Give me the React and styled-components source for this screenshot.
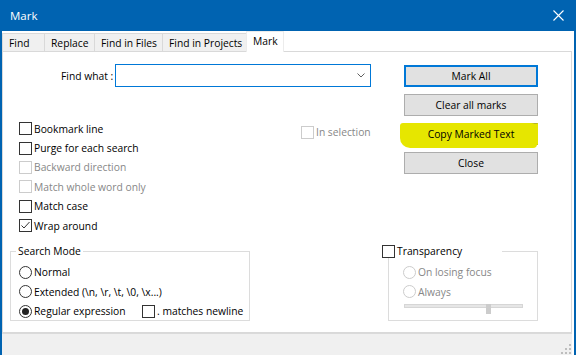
import React from 'react'
import styled, { createGlobalStyle, css } from 'styled-components'

const GlobalStyle = createGlobalStyle`
  html, body { margin: 0; padding: 0; background: #fff; }
  body {
    font-family: "Open Sans", "Noto Sans", sans-serif;
    font-size: 10.3px;
    color: #000;
  }
  * { box-sizing: border-box; }
`

const BLUE = '#0063b1'
const FOCUS = '#0078d7'
const MARKER = '#e6e600'

const tabs = [
  { label: 'Find', w: 43 },
  { label: 'Replace', w: 51 },
  { label: 'Find in Files', w: 69 },
  { label: 'Find in Projects', w: 85 },
  { label: 'Mark', w: 38, selected: true },
]

const options = [
  { label: 'Bookmark line' },
  { label: 'Purge for each search' },
  { label: 'Backward direction', disabled: true },
  { label: 'Match whole word only', disabled: true },
  { label: 'Match case' },
  { label: 'Wrap around', checked: true },
]

const buttons = [
  { label: 'Mark All', primary: true },
  { label: 'Clear all marks' },
  { label: 'Copy Marked Text', marked: true },
  { label: 'Close' },
]

export default function App() {
  return (
    <>
      <GlobalStyle />
      <Window>
        <TitleBar>
          <Title>Mark</Title>
          <CloseIcon />
        </TitleBar>
        <Body>
          <TabStrip>
            {tabs.map(t => (
              <Tab key={t.label} $w={t.w} $selected={t.selected}>{t.label}</Tab>
            ))}
          </TabStrip>
          <Panel>
            <TopRow>
              <LeftPane>
                <FindRow>
                  <FindLabel>Find what :</FindLabel>
                  <Combo>
                    <svg width="8" height="5" viewBox="0 0 8 5">
                      <polyline points="0.5,0.5 4,4 7.5,0.5" fill="none" stroke="#606060" strokeWidth="1" />
                    </svg>
                  </Combo>
                </FindRow>
                <Options>
                  <CheckList>
                    {options.map(o => (
                      <Row key={o.label}>
                        <CheckBox checked={o.checked} disabled={o.disabled} label={o.label} />
                      </Row>
                    ))}
                  </CheckList>
                  <InSelection>
                    <CheckBox disabled label="In selection" />
                  </InSelection>
                </Options>
              </LeftPane>
              <ButtonColumn>
                {buttons.map(b => (
                  <Button key={b.label} $primary={b.primary} $marked={b.marked}>{b.label}</Button>
                ))}
              </ButtonColumn>
            </TopRow>
            <BottomRow>
              <GroupBox $w={240}>
                <GroupTitle $x={5}>Search Mode</GroupTitle>
                <GroupBody $pad={8}>
                  <RadioRow><Radio label="Normal" /></RadioRow>
                  <RadioRow><Radio label={'Extended (\\n, \\r, \\t, \\0, \\x...)'} /></RadioRow>
                  <RadioRow>
                    <RegexCell><Radio checked label="Regular expression" /></RegexCell>
                    <CheckBox label=". matches newline" />
                  </RadioRow>
                </GroupBody>
              </GroupBox>
              <Spacer />
              <GroupBox $w={150}>
                <GroupTitle $x={-7} $w={120} $flush>
                  <CheckBox label="Transparency" />
                </GroupTitle>
                <GroupBody $pad={14}>
                  <RadioRow><Radio disabled label="On losing focus" /></RadioRow>
                  <RadioRow><Radio disabled label="Always" /></RadioRow>
                  <Slider>
                    <Track />
                    <Thumb style={{ left: 82 }} />
                  </Slider>
                </GroupBody>
              </GroupBox>
            </BottomRow>
          </Panel>
          <StatusBar>
            <svg width="10" height="10" viewBox="0 0 10 10">
              {[[8, 0], [4, 4], [8, 4], [0, 8], [4, 8], [8, 8]].map(([x, y]) => (
                <rect key={x + '-' + y} x={x} y={y} width="2" height="2" fill="#bdbdbd" />
              ))}
            </svg>
          </StatusBar>
        </Body>
      </Window>
    </>
  )
}

const CloseIcon = () => (
  <svg width="11" height="11" viewBox="0 0 11 11">
    <path d="M0.5 0.5 L10.5 10.5 M10.5 0.5 L0.5 10.5" stroke="#fff" strokeWidth="1.1" />
  </svg>
)

const CheckBox = ({ checked, disabled, label }) => (
  <Control $disabled={disabled}>
    <Box $disabled={disabled}>
      {checked && (
        <svg width="11" height="11" viewBox="0 0 11 11">
          <polyline points="1.5,5.5 4,8 9.5,2" fill="none" stroke="#333" strokeWidth="1" />
        </svg>
      )}
    </Box>
    {label}
  </Control>
)

const Radio = ({ checked, disabled, label }) => (
  <Control $disabled={disabled}>
    <Circle $disabled={disabled}>{checked && <Dot />}</Circle>
    {label}
  </Control>
)

const Window = styled.div`
  width: 576px;
  height: 355px;
  display: flex;
  flex-direction: column;
  overflow: hidden;
`

const TitleBar = styled.div`
  height: 31px;
  flex: none;
  background: ${BLUE};
  display: flex;
  align-items: center;
  justify-content: space-between;
  padding: 0 12px 0 10px;
`

const Title = styled.div`
  color: #fff;
  font-size: 11.5px;
`

const Body = styled.div`
  flex: 1;
  display: flex;
  flex-direction: column;
  background: #fff;
  border-left: 2px solid ${BLUE};
  border-right: 2px solid ${BLUE};
  padding-right: 2px;
`

const TabStrip = styled.div`
  height: 20px;
  display: flex;
  align-items: flex-end;
`

const Tab = styled.div`
  width: ${p => p.$w}px;
  height: 18px;
  margin-right: -1px;
  display: flex;
  align-items: center;
  padding-left: 6px;
  background: #f0f0f0;
  border: 1px solid #d9d9d9;
  border-bottom: none;
  white-space: nowrap;
  ${p => p.$selected && css`
    position: relative;
    z-index: 1;
    height: 21px;
    margin-bottom: -1px;
    padding-bottom: 3px;
    background: #fff;
    border-color: #ececec;
  `}
`

const Panel = styled.div`
  height: 282px;
  flex: none;
  border: 1px solid #d9d9d9;
  display: flex;
  flex-direction: column;
`

const TopRow = styled.div`
  display: flex;
  padding-top: 12px;
`

const LeftPane = styled.div`
  width: 401px;
`

const FindRow = styled.div`
  display: flex;
  align-items: center;
  padding-left: 58px;
`

const FindLabel = styled.div`
  width: 54px;
  text-align: right;
  padding-right: 4px;
  white-space: nowrap;
`

const Combo = styled.div`
  width: 256px;
  height: 23px;
  border: 1px solid ${FOCUS};
  display: flex;
  align-items: center;
  justify-content: flex-end;
  padding-right: 5px;
`

const Options = styled.div`
  display: flex;
  margin-top: 32px;
  padding-left: 16px;
`

const CheckList = styled.div`
  width: 282px;
  display: flex;
  flex-direction: column;
`

const Row = styled.div`
  height: 19.4px;
  display: flex;
  align-items: center;
`

const InSelection = styled.div`
  margin-top: 6px;
`

const Control = styled.label`
  display: flex;
  align-items: center;
  gap: 2px;
  white-space: nowrap;
  color: ${p => (p.$disabled ? '#878787' : '#000')};
`

const Box = styled.span`
  width: 13px;
  height: 13px;
  flex: none;
  display: flex;
  align-items: center;
  justify-content: center;
  background: #fff;
  border: 1px solid ${p => (p.$disabled ? '#cccccc' : '#333')};
`

const Circle = styled.span`
  width: 13px;
  height: 13px;
  flex: none;
  border-radius: 50%;
  display: flex;
  align-items: center;
  justify-content: center;
  background: #fff;
  border: 1px solid ${p => (p.$disabled ? '#cccccc' : '#333')};
`

const Dot = styled.span`
  width: 7px;
  height: 7px;
  border-radius: 50%;
  background: #222;
`

const ButtonColumn = styled.div`
  width: 134px;
  display: flex;
  flex-direction: column;
  gap: 7px;
  padding-top: 1px;
`

const Button = styled.div`
  position: relative;
  height: 22px;
  display: flex;
  align-items: center;
  justify-content: center;
  background: #e1e1e1;
  border: 1px solid #adadad;
  white-space: nowrap;
  ${p => p.$primary && css`
    border: 2px solid ${FOCUS};
  `}
  ${p => p.$marked && css`
    background: ${MARKER};
    border-color: #b5b52a;
    border-right-color: ${MARKER};
    z-index: 0;
    &::before {
      content: "";
      position: absolute;
      left: -5px;
      top: -1px;
      right: 0;
      bottom: -4px;
      background: ${MARKER};
      border-radius: 3px 6px 4px 10px;
      z-index: -1;
    }
  `}
`

const BottomRow = styled.div`
  display: flex;
  margin-top: 16px;
  padding-left: 7px;
`

const Spacer = styled.div`
  width: 138px;
  flex: none;
`

const GroupBox = styled.div`
  width: ${p => p.$w}px;
  height: 70px;
  border: 1px solid #dcdcdc;
`

const GroupTitle = styled.div`
  width: ${p => (p.$w ? `${p.$w}px` : 'fit-content')};
  height: 14px;
  line-height: 14px;
  margin: -8px 0 0 ${p => p.$x}px;
  padding: ${p => (p.$flush ? '0' : '0 2px')};
  display: flex;
  align-items: center;
  background: #fff;
  white-space: nowrap;
`

const GroupBody = styled.div`
  padding: 4px 0 0 ${p => p.$pad}px;
`

const RadioRow = styled.div`
  height: 19.5px;
  display: flex;
  align-items: center;
`

const RegexCell = styled.div`
  width: 123px;
`

const Slider = styled.div`
  position: relative;
  width: 119px;
  height: 10px;
  margin-top: 2px;
  margin-left: 1px;
`

const Track = styled.div`
  margin-top: 3px;
  height: 4px;
  background: #e6e6e6;
  border: 1px solid #d6d6d6;
`

const Thumb = styled.div`
  position: absolute;
  top: 0;
  width: 5px;
  height: 10px;
  background: #cccccc;
`

const StatusBar = styled.div`
  flex: 1;
  background: #f0f0f0;
  border-top: 1px solid #dadada;
  display: flex;
  align-items: flex-end;
  justify-content: flex-end;
  padding: 0 1px 1px 0;
`
